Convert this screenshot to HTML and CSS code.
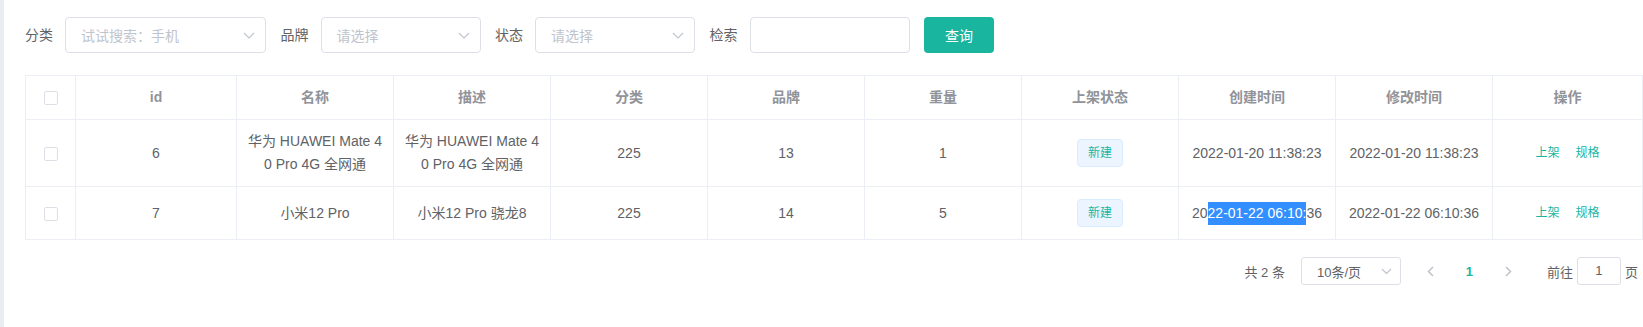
FILE: index.html
```html
<!DOCTYPE html>
<html>
  <head>
    <meta charset="UTF-8" />
    <title>商品管理</title>
    <link rel="stylesheet" href="styles.css">
  </head>
  <body>
    <div class="side-bar"></div>
    <div class="main">
      <!-- 搜索条件 -->
      <div class="search-form">
        <div class="form-item">
          <span class="form-label">分类</span>
          <div class="select select-wide">
            <span class="placeholder">试试搜索：手机</span>
            <svg class="select-arrow" width="12" height="7" viewBox="0 0 12 7"><path d="M1 1l5 5 5-5" /></svg>
          </div>
        </div>
        <div class="form-item">
          <span class="form-label">品牌</span>
          <div class="select">
            <span class="placeholder">请选择</span>
            <svg class="select-arrow" width="12" height="7" viewBox="0 0 12 7"><path d="M1 1l5 5 5-5" /></svg>
          </div>
        </div>
        <div class="form-item">
          <span class="form-label">状态</span>
          <div class="select">
            <span class="placeholder">请选择</span>
            <svg class="select-arrow" width="12" height="7" viewBox="0 0 12 7"><path d="M1 1l5 5 5-5" /></svg>
          </div>
        </div>
        <div class="form-item">
          <span class="form-label">检索</span>
          <div class="select"></div>
        </div>
        <button class="btn-primary">查询</button>
      </div>

      <!-- 列表 -->
      <div class="table-wrap">
        <table class="data-table">
          <colgroup>
            <col class="col-check">
            <col class="col-id">
            <col class="col-auto">
            <col class="col-auto">
            <col class="col-auto">
            <col class="col-auto">
            <col class="col-auto">
            <col class="col-auto">
            <col class="col-auto">
            <col class="col-auto">
            <col class="col-op">
          </colgroup>
          <thead>
            <tr>
              <th><div class="cell"><span class="checkbox"></span></div></th>
              <th><div class="cell">id</div></th>
              <th><div class="cell">名称</div></th>
              <th><div class="cell">描述</div></th>
              <th><div class="cell">分类</div></th>
              <th><div class="cell">品牌</div></th>
              <th><div class="cell">重量</div></th>
              <th><div class="cell">上架状态</div></th>
              <th><div class="cell">创建时间</div></th>
              <th><div class="cell">修改时间</div></th>
              <th><div class="cell">操作</div></th>
            </tr>
          </thead>
          <tbody>
            <tr>
              <td><div class="cell"><span class="checkbox"></span></div></td>
              <td><div class="cell">6</div></td>
              <td><div class="cell">华为 HUAWEI Mate 40 Pro 4G 全网通</div></td>
              <td><div class="cell">华为 HUAWEI Mate 40 Pro 4G 全网通</div></td>
              <td><div class="cell">225</div></td>
              <td><div class="cell">13</div></td>
              <td><div class="cell">1</div></td>
              <td><div class="cell"><span class="tag">新建</span></div></td>
              <td><div class="cell">2022-01-20 11:38:23</div></td>
              <td><div class="cell">2022-01-20 11:38:23</div></td>
              <td><div class="cell"><a class="link" href="#">上架</a><a class="link" href="#">规格</a></div></td>
            </tr>
            <tr>
              <td><div class="cell"><span class="checkbox"></span></div></td>
              <td><div class="cell">7</div></td>
              <td><div class="cell">小米12 Pro</div></td>
              <td><div class="cell">小米12 Pro 骁龙8</div></td>
              <td><div class="cell">225</div></td>
              <td><div class="cell">14</div></td>
              <td><div class="cell">5</div></td>
              <td><div class="cell"><span class="tag">新建</span></div></td>
              <td><div class="cell">20<span class="selected">22-01-22 06:10:</span>36</div></td>
              <td><div class="cell">2022-01-22 06:10:36</div></td>
              <td><div class="cell"><a class="link" href="#">上架</a><a class="link" href="#">规格</a></div></td>
            </tr>
          </tbody>
        </table>
      </div>

      <!-- 分页 -->
      <div class="pagination">
        <span class="total">共 2 条</span>
        <div class="sizes">
          <span>10条/页</span>
          <svg class="select-arrow" width="11" height="6" viewBox="0 0 11 6"><path d="M1 1l4.5 4.5 4.5-4.5" /></svg>
        </div>
        <span class="btn-page">
          <svg width="7" height="11" viewBox="0 0 7 11"><path d="M6 1L1.5 5.5 6 10" /></svg>
        </span>
        <span class="btn-page active">1</span>
        <span class="btn-page">
          <svg width="7" height="11" viewBox="0 0 7 11"><path d="M1 1l4.5 4.5L1 10" /></svg>
        </span>
        <span class="jump">前往</span>
        <span class="jump-input">1</span>
        <span class="jump-unit">页</span>
      </div>
    </div>
  </body>
</html>
```

FILE: styles.css
```css
*{margin: 0;padding: 0;box-sizing: border-box}
body{
  display: flex;
  min-height: 100vh;
  font-family: "Liberation Sans", "Noto Sans CJK SC", sans-serif;
  font-size: 14px;
  color: #606266;
  background: #fff;
}
.side-bar{
  width: 4px;
  flex-shrink: 0;
  background: #e9ecf0;
}
.main{
  flex: 1;
  padding: 17px 0 0 21px;
}

/* 搜索条件 */
.search-form{
  display: flex;
  align-items: center;
  gap: 14.5px;
  height: 36px;
  margin-bottom: 22px;
}
.form-item{
  display: flex;
  align-items: center;
}
.form-label{
  padding-right: 12px;
  line-height: 36px;
}
.select{
  display: flex;
  align-items: center;
  width: 160px;
  height: 36px;
  padding: 0 10px 0 15px;
  border: 1px solid #dcdfe6;
  border-radius: 4px;
  background: #fff;
}
.select-wide{
  width: 201px;
}
.placeholder{
  flex: 1;
  color: #c0c4cc;
}
.select-arrow{
  margin-left: auto;
}
.select-arrow path,
.btn-page path{
  fill: none;
  stroke: #c0c4cc;
  stroke-width: 1.2;
}
.btn-primary{
  width: 70px;
  height: 36px;
  border: none;
  border-radius: 4px;
  background: #1ab59f;
  color: #fff;
  font-family: inherit;
  font-size: 14px;
}

/* 列表 */
.table-wrap{
  width: 1618px;
  border-left: 1px solid #ebeef5;
  border-top: 1px solid #ebeef5;
}
.data-table{
  width: 1617px;
  table-layout: fixed;
  border-collapse: separate;
  border-spacing: 0;
}
.col-check{width: 50px}
.col-id{width: 161px}
.col-auto{width: 157px}
.col-op{width: 150px}
.data-table th,
.data-table td{
  padding: 10px 0;
  border-right: 1px solid #ebeef5;
  border-bottom: 1px solid #ebeef5;
  text-align: center;
  vertical-align: middle;
  font-weight: normal;
}
.cell{
  padding: 0 10px;
  line-height: 23px;
  word-break: break-all;
}
.data-table th .cell{
  color: #909399;
  font-weight: bold;
}
.checkbox{
  display: inline-block;
  width: 14px;
  height: 14px;
  border: 1px solid #dcdfe6;
  border-radius: 2px;
  background: #fff;
  vertical-align: middle;
}
.tag{
  display: inline-block;
  height: 28px;
  margin: 2px 0;
  padding: 0 10px;
  line-height: 26px;
  font-size: 12px;
  color: #1ab59f;
  background: #ecf5ff;
  border: 1px solid #d9ecff;
  border-radius: 4px;
  vertical-align: middle;
}
.link{
  font-size: 12px;
  color: #1ab59f;
  text-decoration: none;
}
.link + .link{
  margin-left: 16px;
}
.selected{
  display: inline-block;
  background: #338fff;
  color: #fff;
}

/* 分页 */
.pagination{
  display: flex;
  justify-content: flex-end;
  align-items: center;
  height: 28px;
  margin-top: 17px;
  padding: 0 5px;
  font-size: 13px;
}
.total{
  margin-right: 16px;
}
.sizes{
  display: flex;
  align-items: center;
  width: 100px;
  height: 28px;
  margin-right: 10px;
  padding: 0 8px 0 15px;
  border: 1px solid #dcdfe6;
  border-radius: 3px;
}
.btn-page{
  display: flex;
  align-items: center;
  justify-content: center;
  width: 39px;
  height: 28px;
}
.btn-page path{
  stroke-width: 1.6;
}
.btn-page.active{
  color: #1ab59f;
  font-weight: bold;
}
.jump{
  margin-left: 19px;
}
.jump-input{
  width: 44px;
  height: 28px;
  margin: 0 4px;
  line-height: 26px;
  text-align: center;
  border: 1px solid #dcdfe6;
  border-radius: 3px;
}
```
